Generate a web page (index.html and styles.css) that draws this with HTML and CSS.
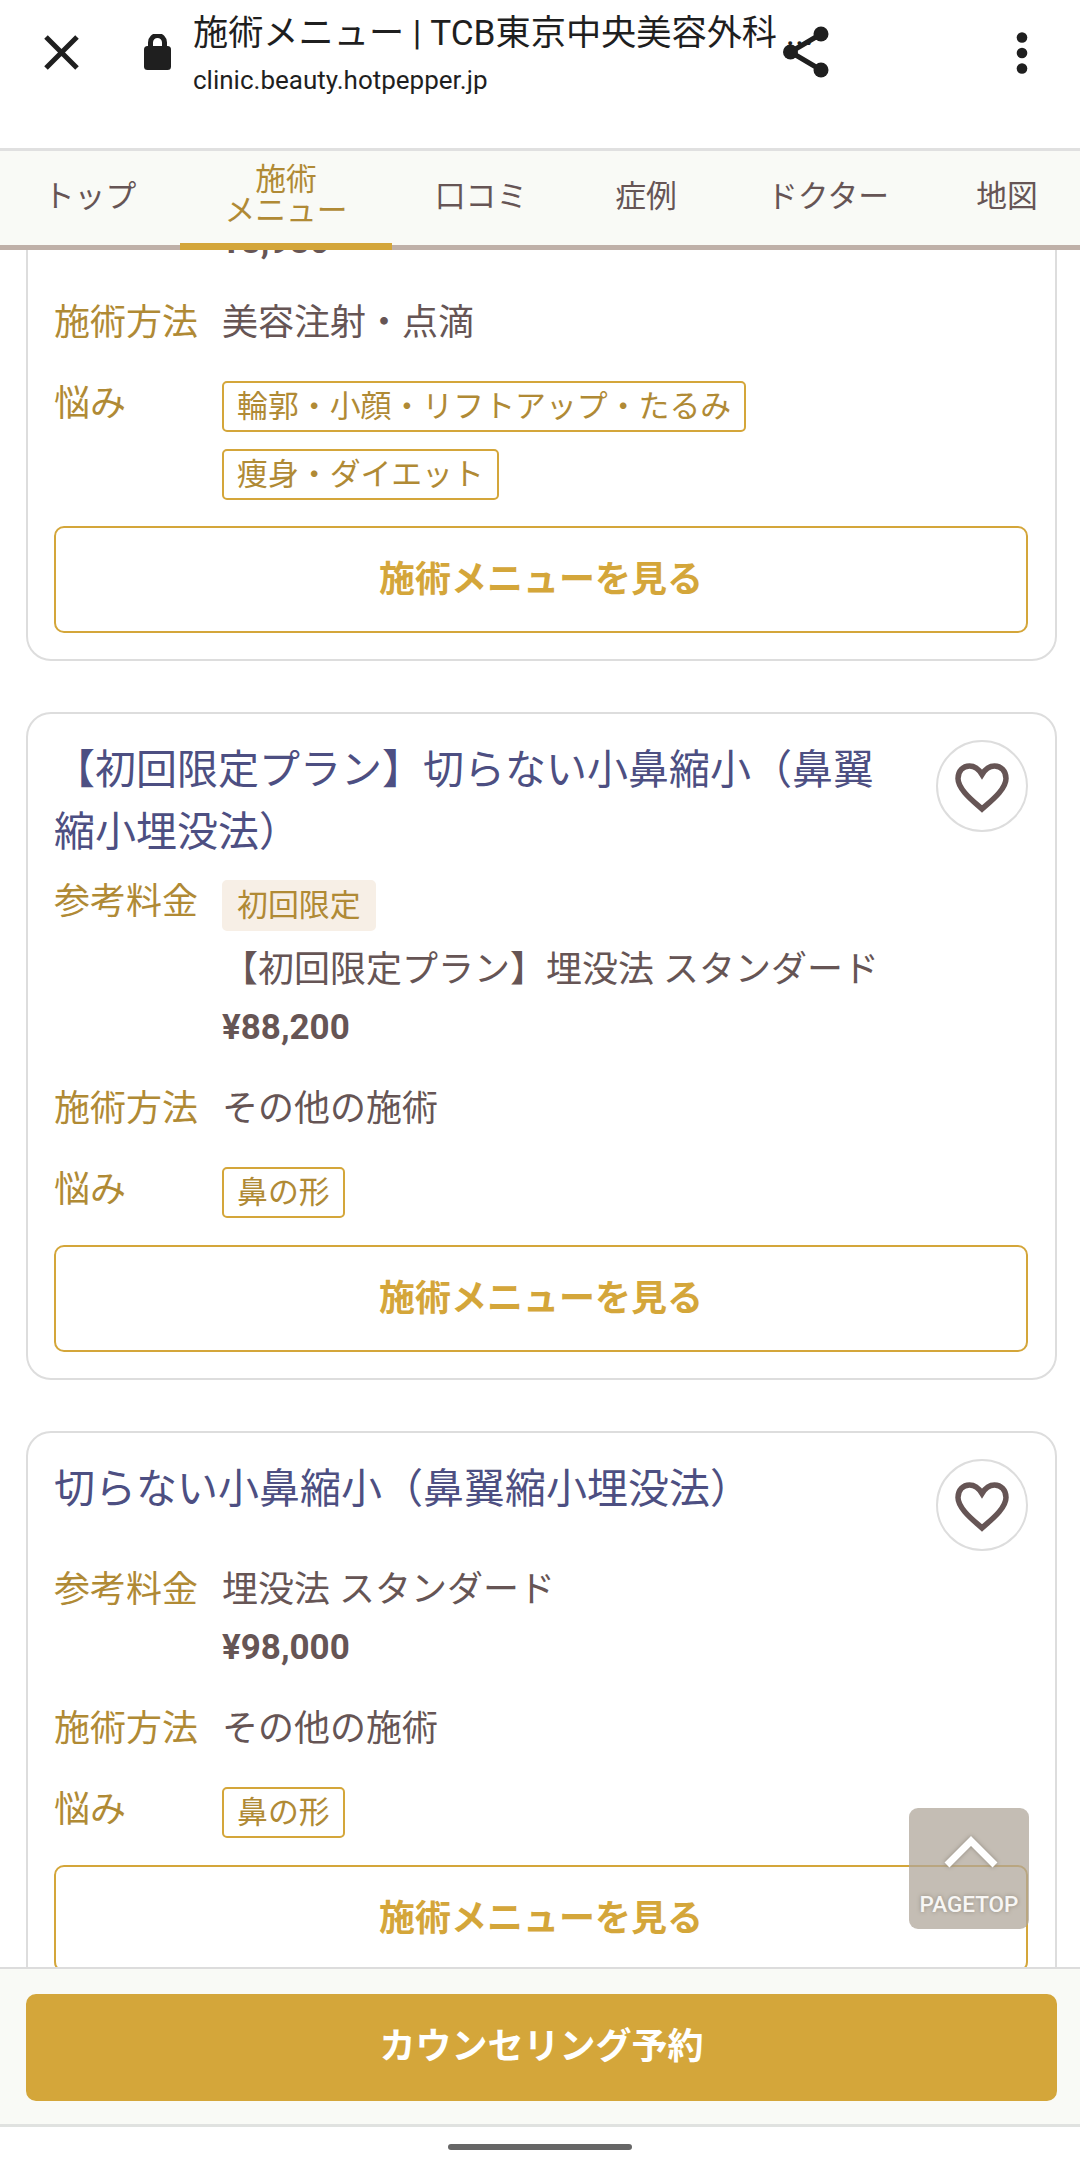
FILE: index.html
```html
<!DOCTYPE html>
<html lang="ja">
<head>
  <meta charset="UTF-8" />
  <title>施術メニュー | TCB東京中央美容外科</title>
  <link rel="stylesheet" href="styles.css">
</head>
<body>
  <header class="browser-bar">
    <svg class="icon-close" viewBox="0 0 35 35"><path d="M2 2L33 33M33 2L2 33" /></svg>
    <svg class="icon-lock" viewBox="0 0 27 36">
      <rect x="0" y="12" width="27" height="24" rx="3.5" />
      <path d="M6.5 14V8.5a7 7 0 0 1 14 0V14" />
    </svg>
    <div class="page-info">
      <div class="page-title">施術メニュー | TCB東京中央美容外科 ...</div>
      <div class="page-url">clinic.beauty.hotpepper.jp</div>
    </div>
    <svg class="icon-share" viewBox="0 0 46 52">
      <path d="M38 8L7.500 26L38 44" />
      <circle cx="38" cy="8" r="7.500" /><circle cx="7.500" cy="26" r="7.500" /><circle cx="38" cy="44" r="7.500" />
    </svg>
    <svg class="icon-more" viewBox="0 0 12 42">
      <circle cx="6" cy="5.500" r="5.300" /><circle cx="6" cy="21" r="5.300" /><circle cx="6" cy="36.500" r="5.300" />
    </svg>
  </header>

  <nav class="tabs">
    <a class="tab tab-top">トップ</a>
    <a class="tab tab-menu active">施術<br>メニュー</a>
    <a class="tab tab-review">口コミ</a>
    <a class="tab tab-case">症例</a>
    <a class="tab tab-doctor">ドクター</a>
    <a class="tab tab-map">地図</a>
  </nav>

  <main class="menu-list">
    <section class="card card-first">
      <dl class="row">
        <dt></dt>
        <dd><b class="price">¥8,980</b></dd>
      </dl>
      <dl class="row">
        <dt>施術方法</dt>
        <dd>美容注射・点滴</dd>
      </dl>
      <dl class="row">
        <dt>悩み</dt>
        <dd class="tags">
          <span class="tag">輪郭・小顔・リフトアップ・たるみ</span>
          <span class="tag">痩身・ダイエット</span>
        </dd>
      </dl>
      <a class="detail-button">施術メニューを見る</a>
    </section>

    <section class="card">
      <div class="card-head">
        <h2>【初回限定プラン】切らない小鼻縮小（鼻翼縮小埋没法）</h2>
        <span class="favorite"><svg viewBox="0 0 54 50"><path d="M27 46C20 39.500 3 27 3 15.500C3 8 8 3 14.500 3C20 3 24 6.500 27 11.500C30 6.500 34 3 39.500 3C46 3 51 8 51 15.500C51 27 34 39.500 27 46Z" /></svg></span>
      </div>
      <dl class="row">
        <dt>参考料金</dt>
        <dd>
          <span class="badge">初回限定</span>
          <div>【初回限定プラン】埋没法 スタンダード</div>
          <b class="price">¥88,200</b>
        </dd>
      </dl>
      <dl class="row">
        <dt>施術方法</dt>
        <dd>その他の施術</dd>
      </dl>
      <dl class="row">
        <dt>悩み</dt>
        <dd class="tags"><span class="tag">鼻の形</span></dd>
      </dl>
      <a class="detail-button">施術メニューを見る</a>
    </section>

    <section class="card">
      <div class="card-head">
        <h2>切らない小鼻縮小（鼻翼縮小埋没法）</h2>
        <span class="favorite"><svg viewBox="0 0 54 50"><path d="M27 46C20 39.500 3 27 3 15.500C3 8 8 3 14.500 3C20 3 24 6.500 27 11.500C30 6.500 34 3 39.500 3C46 3 51 8 51 15.500C51 27 34 39.500 27 46Z" /></svg></span>
      </div>
      <dl class="row">
        <dt>参考料金</dt>
        <dd>
          <div>埋没法 スタンダード</div>
          <b class="price">¥98,000</b>
        </dd>
      </dl>
      <dl class="row">
        <dt>施術方法</dt>
        <dd>その他の施術</dd>
      </dl>
      <dl class="row">
        <dt>悩み</dt>
        <dd class="tags"><span class="tag">鼻の形</span></dd>
      </dl>
      <a class="detail-button">施術メニューを見る</a>
    </section>
  </main>

  <a class="pagetop">
    <svg viewBox="0 0 56 34"><path d="M4 30L28 6L52 30" /></svg>
    <span>PAGETOP</span>
  </a>

  <footer class="reserve-bar">
    <a class="reserve-button">カウンセリング予約</a>
  </footer>
  <div class="home-bar"><span></span></div>
</body>
</html>
```
FILE: styles.css
```css
* {
  box-sizing: border-box;
}
body {
  margin: 0;
  height: 2164px;
  display: flex;
  flex-direction: column;
  overflow: hidden;
  background-color: #ffffff;
  color: #665555;
  font-family: Roboto, "Noto Sans CJK JP", sans-serif;
  font-size: 36px;
  line-height: 57px;
}
h2, dl, dd {
  margin: 0;
}

/* browser bar */
.browser-bar {
  flex: none;
  height: 151px;
  display: flex;
  align-items: flex-start;
  padding: 0 53px 0 44px;
  border-bottom: 3px solid #e0e0e0;
  color: #1f1f1f;
}
.browser-bar svg {
  flex: none;
  fill: #1f1f1f;
}
.browser-bar path {
  fill: none;
  stroke: #1f1f1f;
  stroke-width: 5;
}
.icon-close {
  width: 35px;
  height: 35px;
  margin-top: 35px;
}
.icon-lock {
  width: 27px;
  height: 36px;
  margin: 34px 22px 0 65px;
}
.page-info {
  width: 590px;
  padding-top: 9px;
  white-space: nowrap;
}
.page-title {
  font-size: 35.200px;
  line-height: 48px;
}
.page-url {
  font-size: 26px;
  line-height: 46px;
}
.icon-share {
  width: 46px;
  height: 52px;
  margin-top: 26px;
}
.icon-more {
  width: 12px;
  height: 42px;
  margin: 32px -1px 0 auto;
}

/* tabs */
.tabs {
  flex: none;
  height: 99px;
  display: flex;
  background-color: #f9faf6;
  border-bottom: 5px solid #bfb0a8;
  font-size: 30.800px;
  line-height: 31px;
}
.tab {
  height: 99px;
  display: flex;
  align-items: center;
  justify-content: center;
  text-align: center;
  padding-bottom: 8px;
}
.tab-top { width: 180px; }
.tab-menu { width: 212px; }
.tab-review { width: 178px; }
.tab-case { width: 152px; }
.tab-doctor { width: 212px; }
.tab-map { width: 146px; }
.tab.active {
  color: #b08a35;
  border-bottom: 7px solid #d4a63a;
  padding-bottom: 4px;
}

/* menu cards */
.menu-list {
  flex: 1;
  min-height: 0;
  overflow: hidden;
  padding: 0 23px 0 26px;
}
.card {
  border: 2px solid #dddddd;
  border-radius: 25px;
  padding: 24px 27px 26px 26px;
  margin-bottom: 51px;
}
.card-first {
  margin-top: -63px;
}
.card-head {
  display: flex;
  justify-content: space-between;
  align-items: flex-start;
  margin-bottom: 11px;
}
h2 {
  width: 824px;
  padding-top: 2px;
  color: #4d4f82;
  font-size: 41px;
  font-weight: normal;
  line-height: 61.500px;
}
.favorite {
  width: 92px;
  height: 92px;
  margin-top: 2px;
  display: flex;
  align-items: center;
  justify-content: center;
  border: 2px solid #dddddd;
  border-radius: 50%;
}
.favorite svg {
  width: 54px;
  height: 50px;
  margin-top: 3px;
  fill: none;
  stroke: #665555;
  stroke-width: 5.500;
}
.row {
  display: flex;
  margin-bottom: 24.500px;
}
.row:last-of-type {
  margin-bottom: 26px;
}
dt {
  width: 168px;
  flex: none;
  color: #b08a35;
}
.price {
  display: block;
  font-size: 35px;
}
.tags {
  display: flex;
  flex-direction: column;
  align-items: flex-start;
  gap: 17px;
  padding-top: 5px;
}
.tag, .badge {
  display: block;
  width: fit-content;
  height: 51px;
  padding: 0 13px;
  border: 2px solid #d4a63a;
  border-radius: 5px;
  color: #b08a35;
  font-size: 30.900px;
  line-height: 48px;
}
.badge {
  margin: 6px 0 11px;
  border-color: #f7efe6;
  background-color: #f7efe6;
}
.detail-button, .reserve-button {
  display: block;
  height: 107px;
  border: 2px solid #d4a63a;
  border-radius: 10px;
  color: #d4a63a;
  font-weight: bold;
  line-height: 104px;
  text-align: center;
}

/* floating button over the list */
.pagetop {
  position: absolute;
  left: 909px;
  top: 1808px;
  width: 120px;
  height: 121px;
  display: flex;
  flex-direction: column;
  align-items: center;
  border-radius: 9px;
  background-color: rgba(175, 166, 154, 0.74);
  color: #f7f6f4;
  font-size: 22.500px;
  font-weight: 500;
  line-height: 30px;
  text-shadow: 0 0 4px #8f887c;
}
.pagetop svg {
  width: 56px;
  height: 34px;
  margin: 27px 0 20px 3px;
  fill: none;
  stroke: #ffffff;
  stroke-width: 7;
  filter: drop-shadow(0 0 2px #8f887c);
}

/* bottom bars */
.reserve-bar {
  flex: none;
  height: 160px;
  padding: 25px 23px 0 26px;
  background-color: #f9faf6;
  border-top: 2px solid #dcdcdc;
  border-bottom: 3px solid #e0e2e0;
}
.reserve-button {
  background-color: #d4a63a;
  color: #ffffff;
  line-height: 102px;
}
.home-bar {
  flex: none;
  height: 37px;
  display: flex;
  justify-content: center;
  padding-top: 17px;
}
.home-bar span {
  width: 184px;
  height: 6px;
  border-radius: 3px;
  background-color: #666666;
}
```
